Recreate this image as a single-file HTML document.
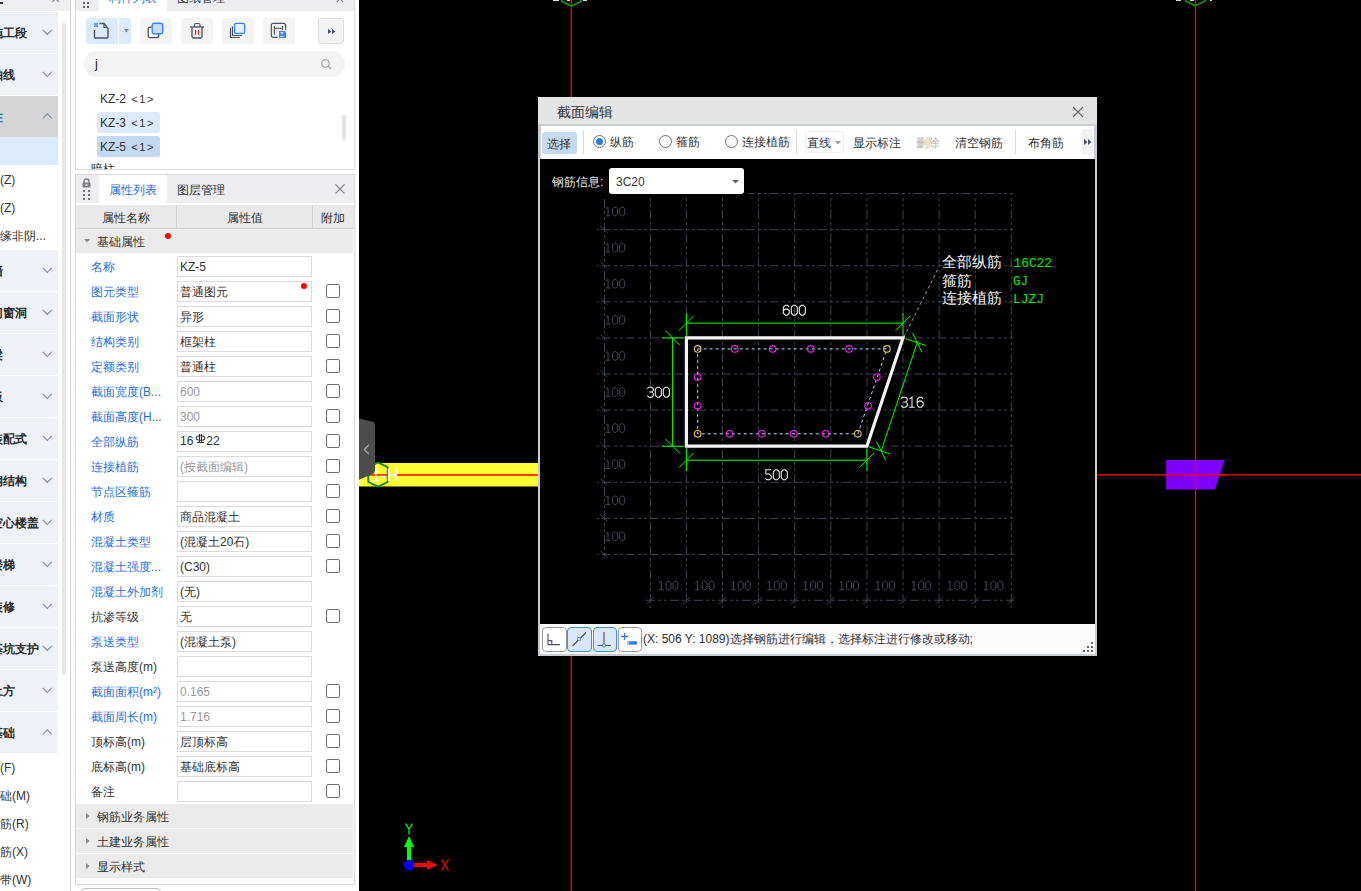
<!DOCTYPE html><html><head><meta charset="utf-8"><style>

*{box-sizing:border-box;margin:0;padding:0}
html,body{width:1361px;height:891px;overflow:hidden;background:#000;font-family:"Liberation Sans",sans-serif;font-size:12px;color:#333}
.ab{position:absolute}
.t{position:absolute;white-space:nowrap;line-height:14px}
svg{position:absolute;overflow:visible}

</style></head><body>
<div class="ab" style="left:0;top:0;width:359px;height:891px;background:#fff"></div>
<div class="ab" style="left:0;top:0;width:70px;height:11px;background:#efeff2"></div>
<div class="ab" style="left:0;top:2px;width:3px;height:1.5px;background:#333"></div>
<svg style="left:0;top:0" width="1" height="1"><path d="M52.5 1.8 L56 -2 M58.8 1.8 L55.3 -2" stroke="#8a8a8a" stroke-width="1.2"/></svg>
<div class="ab" style="left:70px;top:0;width:1px;height:891px;background:#d4d4d4"></div>
<div class="ab" style="left:0;top:12px;width:58px;height:41px;background:#f0f1f6"></div>
<div class="t" style="left:-9px;top:26px;font-weight:bold;color:#2b2b2b">施工段</div>
<svg style="left:42px;top:29px" width="12" height="7"><path d="M0.8 0.8 L5.3 5.3 L9.8 0.8" fill="none" stroke="#8692ad" stroke-width="1.2"/></svg>
<div class="ab" style="left:0;top:54px;width:58px;height:41px;background:#f0f1f6"></div>
<div class="t" style="left:-9px;top:68px;font-weight:bold;color:#2b2b2b">轴线</div>
<svg style="left:42px;top:71px" width="12" height="7"><path d="M0.8 0.8 L5.3 5.3 L9.8 0.8" fill="none" stroke="#8692ad" stroke-width="1.2"/></svg>
<div class="ab" style="left:0;top:96px;width:58px;height:41px;background:#d5d5d5"></div>
<div class="t" style="left:-9px;top:110px;font-weight:bold;color:#1f6fe5">柱</div>
<svg style="left:42px;top:113px" width="12" height="7"><path d="M0.8 5.3 L5.3 0.8 L9.8 5.3" fill="none" stroke="#8692ad" stroke-width="1.2"/></svg>
<div class="ab" style="left:0;top:137px;width:58px;height:28px;background:#dbeafd"></div>
<div class="t" style="left:0;top:173px;color:#333">(Z)</div>
<div class="t" style="left:0;top:201px;color:#333">(Z)</div>
<div class="t" style="left:0;top:229px;color:#333">缘非阴...</div>
<div class="ab" style="left:0;top:250px;width:58px;height:41px;background:#f0f1f6"></div>
<div class="t" style="left:-9px;top:264px;font-weight:bold;color:#2b2b2b">墙</div>
<svg style="left:42px;top:267px" width="12" height="7"><path d="M0.8 0.8 L5.3 5.3 L9.8 0.8" fill="none" stroke="#8692ad" stroke-width="1.2"/></svg>
<div class="ab" style="left:0;top:292px;width:58px;height:41px;background:#f0f1f6"></div>
<div class="t" style="left:-9px;top:306px;font-weight:bold;color:#2b2b2b">门窗洞</div>
<svg style="left:42px;top:309px" width="12" height="7"><path d="M0.8 0.8 L5.3 5.3 L9.8 0.8" fill="none" stroke="#8692ad" stroke-width="1.2"/></svg>
<div class="ab" style="left:0;top:334px;width:58px;height:41px;background:#f0f1f6"></div>
<div class="t" style="left:-9px;top:348px;font-weight:bold;color:#2b2b2b">梁</div>
<svg style="left:42px;top:351px" width="12" height="7"><path d="M0.8 0.8 L5.3 5.3 L9.8 0.8" fill="none" stroke="#8692ad" stroke-width="1.2"/></svg>
<div class="ab" style="left:0;top:376px;width:58px;height:41px;background:#f0f1f6"></div>
<div class="t" style="left:-9px;top:390px;font-weight:bold;color:#2b2b2b">板</div>
<svg style="left:42px;top:393px" width="12" height="7"><path d="M0.8 0.8 L5.3 5.3 L9.8 0.8" fill="none" stroke="#8692ad" stroke-width="1.2"/></svg>
<div class="ab" style="left:0;top:418px;width:58px;height:41px;background:#f0f1f6"></div>
<div class="t" style="left:-9px;top:432px;font-weight:bold;color:#2b2b2b">装配式</div>
<svg style="left:42px;top:435px" width="12" height="7"><path d="M0.8 0.8 L5.3 5.3 L9.8 0.8" fill="none" stroke="#8692ad" stroke-width="1.2"/></svg>
<div class="ab" style="left:0;top:460px;width:58px;height:41px;background:#f0f1f6"></div>
<div class="t" style="left:-9px;top:474px;font-weight:bold;color:#2b2b2b">钢结构</div>
<svg style="left:42px;top:477px" width="12" height="7"><path d="M0.8 0.8 L5.3 5.3 L9.8 0.8" fill="none" stroke="#8692ad" stroke-width="1.2"/></svg>
<div class="ab" style="left:0;top:502px;width:58px;height:41px;background:#f0f1f6"></div>
<div class="t" style="left:-9px;top:516px;font-weight:bold;color:#2b2b2b">空心楼盖</div>
<svg style="left:42px;top:519px" width="12" height="7"><path d="M0.8 0.8 L5.3 5.3 L9.8 0.8" fill="none" stroke="#8692ad" stroke-width="1.2"/></svg>
<div class="ab" style="left:0;top:544px;width:58px;height:41px;background:#f0f1f6"></div>
<div class="t" style="left:-9px;top:558px;font-weight:bold;color:#2b2b2b">楼梯</div>
<svg style="left:42px;top:561px" width="12" height="7"><path d="M0.8 0.8 L5.3 5.3 L9.8 0.8" fill="none" stroke="#8692ad" stroke-width="1.2"/></svg>
<div class="ab" style="left:0;top:586px;width:58px;height:41px;background:#f0f1f6"></div>
<div class="t" style="left:-9px;top:600px;font-weight:bold;color:#2b2b2b">装修</div>
<svg style="left:42px;top:603px" width="12" height="7"><path d="M0.8 0.8 L5.3 5.3 L9.8 0.8" fill="none" stroke="#8692ad" stroke-width="1.2"/></svg>
<div class="ab" style="left:0;top:628px;width:58px;height:41px;background:#f0f1f6"></div>
<div class="t" style="left:-9px;top:642px;font-weight:bold;color:#2b2b2b">基坑支护</div>
<svg style="left:42px;top:645px" width="12" height="7"><path d="M0.8 0.8 L5.3 5.3 L9.8 0.8" fill="none" stroke="#8692ad" stroke-width="1.2"/></svg>
<div class="ab" style="left:0;top:670px;width:58px;height:41px;background:#f0f1f6"></div>
<div class="t" style="left:-9px;top:684px;font-weight:bold;color:#2b2b2b">土方</div>
<svg style="left:42px;top:687px" width="12" height="7"><path d="M0.8 0.8 L5.3 5.3 L9.8 0.8" fill="none" stroke="#8692ad" stroke-width="1.2"/></svg>
<div class="ab" style="left:0;top:712px;width:58px;height:41px;background:#f0f1f6"></div>
<div class="t" style="left:-9px;top:726px;font-weight:bold;color:#2b2b2b">基础</div>
<svg style="left:42px;top:729px" width="12" height="7"><path d="M0.8 5.3 L5.3 0.8 L9.8 5.3" fill="none" stroke="#8692ad" stroke-width="1.2"/></svg>
<div class="t" style="left:0;top:761px;color:#333">(F)</div>
<div class="t" style="left:0;top:789px;color:#333">础(M)</div>
<div class="t" style="left:0;top:817px;color:#333">筋(R)</div>
<div class="t" style="left:0;top:845px;color:#333">筋(X)</div>
<div class="t" style="left:0;top:873px;color:#333">带(W)</div>
<div class="ab" style="left:62px;top:23px;width:4px;height:652px;background:#e8e8e8;border-radius:2px"></div>
<div class="ab" style="left:75px;top:-20px;width:280px;height:190px;border:1px solid #d9d9d9;background:#fff"></div>
<div class="ab" style="left:76px;top:0;width:278px;height:11px;background:#eeeef0"></div>
<div class="ab" style="left:99px;top:0;width:68px;height:11px;background:#fff"></div>
<div class="ab" style="left:83px;top:2.2px;width:1.8px;height:1.9px;background:#666"></div>
<div class="ab" style="left:83px;top:6.0px;width:1.8px;height:1.9px;background:#666"></div>
<div class="ab" style="left:87.3px;top:2.2px;width:1.8px;height:1.9px;background:#666"></div>
<div class="ab" style="left:87.3px;top:6.0px;width:1.8px;height:1.9px;background:#666"></div>
<div class="t" style="left:109px;top:-9px;color:#1f6fe5">构件列表</div>
<div class="t" style="left:177px;top:-9px;color:#333">图纸管理</div>
<svg style="left:0;top:0" width="1" height="1"><path d="M336.8 2 L340.5 -2 M343 2 L339.3 -2" stroke="#8a8a8a" stroke-width="1.3"/></svg>
<div class="ab" style="left:86px;top:18px;width:32px;height:26px;background:#dbeafd;border-radius:3px 0 0 3px"></div>
<div class="ab" style="left:119px;top:18px;width:12px;height:26px;background:#dbeafd;border-radius:0 3px 3px 0"></div>
<svg style="left:124px;top:29px" width="6" height="4"><path d="M0 0 H5 L2.5 3.5Z" fill="#8a8a8a"/></svg>
<svg style="left:93px;top:22px" width="18" height="17"><path d="M1.5 8 V15 Q1.5 16 2.5 16 H14 Q15 16 15 15 V6.5 L11 1.5 H6.5" fill="none" stroke="#4b5263" stroke-width="1.4"/><path d="M11 1.5 V5.5 H15" fill="none" stroke="#4b5263" stroke-width="1.2"/><g fill="#3a86f0"><rect x="1" y="1" width="1.6" height="1.6"/><rect x="3.4" y="1" width="1.6" height="1.6"/><rect x="2.2" y="2.2" width="1.6" height="1.6"/><rect x="1" y="3.4" width="1.6" height="1.6"/><rect x="3.4" y="3.4" width="1.6" height="1.6"/></g></svg>
<div class="ab" style="left:140px;top:18px;width:32px;height:26px;background:#f4f4f4;border-radius:3px"></div>
<div class="ab" style="left:181px;top:18px;width:32px;height:26px;background:#f4f4f4;border-radius:3px"></div>
<div class="ab" style="left:222px;top:18px;width:32px;height:26px;background:#f4f4f4;border-radius:3px"></div>
<div class="ab" style="left:263px;top:18px;width:32px;height:26px;background:#f4f4f4;border-radius:3px"></div>
<svg style="left:147px;top:22px" width="18" height="17"><rect x="1.2" y="5.2" width="10.5" height="10.5" rx="2" fill="#fff" stroke="#4b5263" stroke-width="1.3"/><rect x="5.2" y="1.2" width="10.5" height="10.5" rx="2" fill="#c8dbf6" stroke="#3a86f0" stroke-width="1.4"/></svg>
<svg style="left:189px;top:22px" width="17" height="17"><path d="M1 5 H15" stroke="#4b5263" stroke-width="1.3"/><path d="M5.5 5 V3 Q5.5 1.5 7 1.5 H9.5 Q11 1.5 11 3 V5" fill="none" stroke="#4b5263" stroke-width="1.2"/><path d="M3 5 V14.5 Q3 16 4.5 16 H11.5 Q13 16 13 14.5 V5" fill="none" stroke="#4b5263" stroke-width="1.3"/><path d="M6.5 8 V13 M9.5 8 V13" stroke="#e02020" stroke-width="1.2"/></svg>
<svg style="left:229px;top:22px" width="18" height="17"><path d="M1.5 6 V15.5 H11" fill="none" stroke="#4b5263" stroke-width="1.2"/><path d="M3.5 4.5 V13.5 H13" fill="none" stroke="#4b5263" stroke-width="1.2"/><rect x="5.6" y="1.4" width="10" height="10" rx="1.5" fill="#e6f0fd" stroke="#3a86f0" stroke-width="1.4"/></svg>
<svg style="left:270px;top:22px" width="18" height="17"><path d="M7.7 15.4 H3.3 Q1.3 15.4 1.3 13.4 V3.4 Q1.3 1.4 3.3 1.4 H13.6 Q15.6 1.4 15.6 3.4 V7.7" fill="none" stroke="#4b5263" stroke-width="1.2"/><path d="M4.4 4 V12.8 M4.4 6.3 H12.5 M12.5 4 V8" fill="none" stroke="#4b5263" stroke-width="1.1"/><path d="M9 9.1 H14.5 L16 10.6 V16 H9Z" fill="#3a86f0"/><path d="M10.5 10.5 H13.5 M12 10.5 V13 M10.3 14.6 H13.7" stroke="#e8f0ff" stroke-width="0.9"/></svg>
<div class="ab" style="left:318px;top:18px;width:26px;height:26px;background:#f3f3f3;border:1px solid #dcdcdc;border-radius:3px"></div>
<svg style="left:327.5px;top:29px" width="8" height="5"><path d="M0 0 L3.5 2.5 L0 5Z M4 0 L7.5 2.5 L4 5Z" fill="#4b5263"/></svg>
<div class="ab" style="left:84px;top:51px;width:261px;height:26px;background:#f3f3f3;border-radius:13px"></div>
<div class="t" style="left:95px;top:57px;color:#222;font-size:13px">j</div>
<svg style="left:321px;top:59px" width="11" height="11"><circle cx="4.5" cy="4.5" r="3.7" fill="none" stroke="#9a9a9a" stroke-width="1.1"/><path d="M7.3 7.3 L10 10" stroke="#9a9a9a" stroke-width="1.1"/></svg>
<div class="t" style="left:100px;top:92px;color:#333">KZ-2 <span style="letter-spacing:1.5px;font-size:11px;margin-left:2px">&lt;1&gt;</span></div>
<div class="ab" style="left:97px;top:112px;width:63px;height:21px;background:#dbeafd;border-radius:2px"></div>
<div class="t" style="left:100px;top:116px;color:#333">KZ-3 <span style="letter-spacing:1.5px;font-size:11px;margin-left:2px">&lt;1&gt;</span></div>
<div class="ab" style="left:97px;top:136px;width:63px;height:21px;background:#c3d9f2;border-radius:2px"></div>
<div class="t" style="left:100px;top:140px;color:#333">KZ-5 <span style="letter-spacing:1.5px;font-size:11px;margin-left:2px">&lt;1&gt;</span></div>
<div class="ab" style="left:76px;top:160px;width:278px;height:9px;overflow:hidden"><div class="t" style="left:15px;top:2px;color:#333">暗柱</div></div>
<div class="ab" style="left:342px;top:115px;width:4px;height:25px;background:#e4e4e4;border-radius:2px"></div>
<div class="ab" style="left:75px;top:174px;width:280px;height:711px;border:1px solid #d9d9d9;background:#fff"></div>
<div class="ab" style="left:76px;top:175px;width:278px;height:28px;background:#eeeef0"></div>
<div class="ab" style="left:99px;top:175px;width:68px;height:28px;background:#fff"></div>
<svg style="left:82px;top:178px" width="9" height="22"><path d="M2 5 V3.5 Q2 1 4.5 1 Q7 1 7 3.5 V5" fill="none" stroke="#7f7f7f" stroke-width="1.4"/><rect x="0.5" y="4.5" width="8" height="5" rx="1" fill="#7f7f7f"/><rect x="3.6" y="6.2" width="1.8" height="1.6" fill="#eee"/><rect x="1" y="12" width="2" height="2" fill="#777"/><rect x="6" y="12" width="2" height="2" fill="#777"/><rect x="1" y="16" width="2" height="2" fill="#777"/><rect x="6" y="16" width="2" height="2" fill="#777"/><rect x="1" y="20" width="2" height="2" fill="#777"/><rect x="6" y="20" width="2" height="2" fill="#777"/></svg>
<div class="t" style="left:109px;top:183px;color:#1f6fe5">属性列表</div>
<div class="t" style="left:177px;top:183px;color:#333">图层管理</div>
<svg style="left:335px;top:184px" width="10" height="10"><path d="M0.5 0.5 L9.5 9.5 M9.5 0.5 L0.5 9.5" stroke="#8a8a8a" stroke-width="1.1"/></svg>
<div class="ab" style="left:76px;top:205px;width:278px;height:24px;background:#e9e9e9;border-bottom:1px solid #d2d2d2"></div>
<div class="ab" style="left:176px;top:205px;width:1px;height:23px;background:#d2d2d2"></div>
<div class="ab" style="left:312px;top:205px;width:1px;height:23px;background:#d2d2d2"></div>
<div class="t" style="left:102px;top:211px;color:#333">属性名称</div>
<div class="t" style="left:227px;top:211px;color:#333">属性值</div>
<div class="t" style="left:321px;top:211px;color:#333">附加</div>
<div class="ab" style="left:76px;top:229px;width:277px;height:24px;background:#ebebeb"></div>
<svg style="left:84px;top:239px" width="7" height="4"><path d="M0 0 H6 L3 3.5Z" fill="#8a8a8a"/></svg>
<div class="t" style="left:97px;top:235px;color:#333">基础属性</div>
<div class="ab" style="left:165px;top:233px;width:6px;height:6px;border-radius:3px;background:#f00"></div>
<div class="t" style="left:91px;top:260px;color:#1f6fe5">名称</div>
<div class="ab" style="left:177px;top:256px;width:135px;height:21px;border:1px solid #dcdcdc;background:#fff"></div>
<div class="t" style="left:180px;top:260px;color:#333">KZ-5</div>
<div class="t" style="left:91px;top:285px;color:#1f6fe5">图元类型</div>
<div class="ab" style="left:177px;top:281px;width:135px;height:21px;border:1px solid #dcdcdc;background:#fff"></div>
<div class="t" style="left:180px;top:285px;color:#333">普通图元</div>
<div class="ab" style="left:326px;top:284px;width:14px;height:14px;border:1px solid #6f6f6f;border-radius:2px;background:#fff"></div>
<div class="t" style="left:91px;top:310px;color:#1f6fe5">截面形状</div>
<div class="ab" style="left:177px;top:306px;width:135px;height:21px;border:1px solid #dcdcdc;background:#fff"></div>
<div class="t" style="left:180px;top:310px;color:#333">异形</div>
<div class="ab" style="left:326px;top:309px;width:14px;height:14px;border:1px solid #6f6f6f;border-radius:2px;background:#fff"></div>
<div class="t" style="left:91px;top:335px;color:#1f6fe5">结构类别</div>
<div class="ab" style="left:177px;top:331px;width:135px;height:21px;border:1px solid #dcdcdc;background:#fff"></div>
<div class="t" style="left:180px;top:335px;color:#333">框架柱</div>
<div class="ab" style="left:326px;top:334px;width:14px;height:14px;border:1px solid #6f6f6f;border-radius:2px;background:#fff"></div>
<div class="t" style="left:91px;top:360px;color:#1f6fe5">定额类别</div>
<div class="ab" style="left:177px;top:356px;width:135px;height:21px;border:1px solid #dcdcdc;background:#fff"></div>
<div class="t" style="left:180px;top:360px;color:#333">普通柱</div>
<div class="ab" style="left:326px;top:359px;width:14px;height:14px;border:1px solid #6f6f6f;border-radius:2px;background:#fff"></div>
<div class="t" style="left:91px;top:385px;color:#1f6fe5">截面宽度(B...</div>
<div class="ab" style="left:177px;top:381px;width:135px;height:21px;border:1px solid #dcdcdc;background:#fff"></div>
<div class="t" style="left:180px;top:385px;color:#9a9a9a">600</div>
<div class="ab" style="left:326px;top:384px;width:14px;height:14px;border:1px solid #6f6f6f;border-radius:2px;background:#fff"></div>
<div class="t" style="left:91px;top:410px;color:#1f6fe5">截面高度(H...</div>
<div class="ab" style="left:177px;top:406px;width:135px;height:21px;border:1px solid #dcdcdc;background:#fff"></div>
<div class="t" style="left:180px;top:410px;color:#9a9a9a">300</div>
<div class="ab" style="left:326px;top:409px;width:14px;height:14px;border:1px solid #6f6f6f;border-radius:2px;background:#fff"></div>
<div class="t" style="left:91px;top:435px;color:#1f6fe5">全部纵筋</div>
<div class="ab" style="left:177px;top:431px;width:135px;height:21px;border:1px solid #dcdcdc;background:#fff"></div>
<div class="t" style="left:180px;top:434px;color:#333">16<span style="display:inline-block;width:13px"></span>22</div>
<div class="ab" style="left:326px;top:434px;width:14px;height:14px;border:1px solid #6f6f6f;border-radius:2px;background:#fff"></div>
<div class="t" style="left:91px;top:460px;color:#1f6fe5">连接植筋</div>
<div class="ab" style="left:177px;top:456px;width:135px;height:21px;border:1px solid #dcdcdc;background:#fff"></div>
<div class="t" style="left:180px;top:460px;color:#9a9a9a">(按截面编辑)</div>
<div class="ab" style="left:326px;top:459px;width:14px;height:14px;border:1px solid #6f6f6f;border-radius:2px;background:#fff"></div>
<div class="t" style="left:91px;top:485px;color:#1f6fe5">节点区箍筋</div>
<div class="ab" style="left:177px;top:481px;width:135px;height:21px;border:1px solid #dcdcdc;background:#fff"></div>
<div class="ab" style="left:326px;top:484px;width:14px;height:14px;border:1px solid #6f6f6f;border-radius:2px;background:#fff"></div>
<div class="t" style="left:91px;top:510px;color:#1f6fe5">材质</div>
<div class="ab" style="left:177px;top:506px;width:135px;height:21px;border:1px solid #dcdcdc;background:#fff"></div>
<div class="t" style="left:180px;top:510px;color:#333">商品混凝土</div>
<div class="ab" style="left:326px;top:509px;width:14px;height:14px;border:1px solid #6f6f6f;border-radius:2px;background:#fff"></div>
<div class="t" style="left:91px;top:535px;color:#1f6fe5">混凝土类型</div>
<div class="ab" style="left:177px;top:531px;width:135px;height:21px;border:1px solid #dcdcdc;background:#fff"></div>
<div class="t" style="left:180px;top:535px;color:#333">(混凝土20石)</div>
<div class="ab" style="left:326px;top:534px;width:14px;height:14px;border:1px solid #6f6f6f;border-radius:2px;background:#fff"></div>
<div class="t" style="left:91px;top:560px;color:#1f6fe5">混凝土强度...</div>
<div class="ab" style="left:177px;top:556px;width:135px;height:21px;border:1px solid #dcdcdc;background:#fff"></div>
<div class="t" style="left:180px;top:560px;color:#333">(C30)</div>
<div class="ab" style="left:326px;top:559px;width:14px;height:14px;border:1px solid #6f6f6f;border-radius:2px;background:#fff"></div>
<div class="t" style="left:91px;top:585px;color:#1f6fe5">混凝土外加剂</div>
<div class="ab" style="left:177px;top:581px;width:135px;height:21px;border:1px solid #dcdcdc;background:#fff"></div>
<div class="t" style="left:180px;top:585px;color:#333">(无)</div>
<div class="t" style="left:91px;top:610px;color:#333">抗渗等级</div>
<div class="ab" style="left:177px;top:606px;width:135px;height:21px;border:1px solid #dcdcdc;background:#fff"></div>
<div class="t" style="left:180px;top:610px;color:#333">无</div>
<div class="ab" style="left:326px;top:609px;width:14px;height:14px;border:1px solid #6f6f6f;border-radius:2px;background:#fff"></div>
<div class="t" style="left:91px;top:635px;color:#1f6fe5">泵送类型</div>
<div class="ab" style="left:177px;top:631px;width:135px;height:21px;border:1px solid #dcdcdc;background:#fff"></div>
<div class="t" style="left:180px;top:635px;color:#333">(混凝土泵)</div>
<div class="t" style="left:91px;top:660px;color:#333">泵送高度(m)</div>
<div class="ab" style="left:177px;top:656px;width:135px;height:21px;border:1px solid #dcdcdc;background:#fff"></div>
<div class="t" style="left:91px;top:685px;color:#1f6fe5">截面面积(m²)</div>
<div class="ab" style="left:177px;top:681px;width:135px;height:21px;border:1px solid #dcdcdc;background:#fff"></div>
<div class="t" style="left:180px;top:685px;color:#9a9a9a">0.165</div>
<div class="ab" style="left:326px;top:684px;width:14px;height:14px;border:1px solid #6f6f6f;border-radius:2px;background:#fff"></div>
<div class="t" style="left:91px;top:710px;color:#1f6fe5">截面周长(m)</div>
<div class="ab" style="left:177px;top:706px;width:135px;height:21px;border:1px solid #dcdcdc;background:#fff"></div>
<div class="t" style="left:180px;top:710px;color:#9a9a9a">1.716</div>
<div class="ab" style="left:326px;top:709px;width:14px;height:14px;border:1px solid #6f6f6f;border-radius:2px;background:#fff"></div>
<div class="t" style="left:91px;top:735px;color:#333">顶标高(m)</div>
<div class="ab" style="left:177px;top:731px;width:135px;height:21px;border:1px solid #dcdcdc;background:#fff"></div>
<div class="t" style="left:180px;top:735px;color:#333">层顶标高</div>
<div class="ab" style="left:326px;top:734px;width:14px;height:14px;border:1px solid #6f6f6f;border-radius:2px;background:#fff"></div>
<div class="t" style="left:91px;top:760px;color:#333">底标高(m)</div>
<div class="ab" style="left:177px;top:756px;width:135px;height:21px;border:1px solid #dcdcdc;background:#fff"></div>
<div class="t" style="left:180px;top:760px;color:#333">基础底标高</div>
<div class="ab" style="left:326px;top:759px;width:14px;height:14px;border:1px solid #6f6f6f;border-radius:2px;background:#fff"></div>
<div class="t" style="left:91px;top:785px;color:#333">备注</div>
<div class="ab" style="left:177px;top:781px;width:135px;height:21px;border:1px solid #dcdcdc;background:#fff"></div>
<div class="ab" style="left:326px;top:784px;width:14px;height:14px;border:1px solid #6f6f6f;border-radius:2px;background:#fff"></div>
<svg style="left:195px;top:433px" width="11" height="11"><ellipse cx="5.5" cy="5" rx="4.3" ry="2.3" fill="none" stroke="#333" stroke-width="1.1"/><path d="M4.5 1 V9.5 M6.5 1 V9.5 M2 9.5 H9" stroke="#333" stroke-width="1.1"/></svg>
<div class="ab" style="left:301px;top:283px;width:6px;height:6px;border-radius:3px;background:#f00"></div>
<div class="ab" style="left:76px;top:804px;width:277px;height:24px;background:#ebebeb"></div>
<svg style="left:86px;top:813px" width="4" height="7"><path d="M0 0 V6 L3.5 3Z" fill="#8a8a8a"/></svg>
<div class="t" style="left:97px;top:810px;color:#333">钢筋业务属性</div>
<div class="ab" style="left:76px;top:829px;width:277px;height:24px;background:#ebebeb"></div>
<svg style="left:86px;top:838px" width="4" height="7"><path d="M0 0 V6 L3.5 3Z" fill="#8a8a8a"/></svg>
<div class="t" style="left:97px;top:835px;color:#333">土建业务属性</div>
<div class="ab" style="left:76px;top:854px;width:277px;height:24px;background:#ebebeb"></div>
<svg style="left:86px;top:863px" width="4" height="7"><path d="M0 0 V6 L3.5 3Z" fill="#8a8a8a"/></svg>
<div class="t" style="left:97px;top:860px;color:#333">显示样式</div>
<div class="ab" style="left:81px;top:888px;width:80px;height:20px;border:1px solid #bdbdbd;border-radius:4px;background:#fff"></div>
<svg style="left:0;top:0" width="1361" height="891" viewBox="0 0 1361 891"><rect x="359" y="463" width="190" height="23.5" fill="#ffff33"/><rect x="359" y="474.2" width="1002" height="1.3" fill="#ff0000"/><rect x="359" y="474" width="190" height="2" fill="#ff4000"/><rect x="570.7" y="0" width="1.3" height="891" fill="#ff0000"/><rect x="1194.85" y="0" width="1.3" height="891" fill="#ff0000"/><path d="M378.0 462.5 L387.7 467.2 V482.0 L378.0 486.7 L368.3 482.0 V467.2Z" fill="none" stroke="#138a13" stroke-width="1.9" stroke-linejoin="round"/><path d="M571.5 -18.1 L581.2 -13.4 V1.4 L571.5 6.1 L561.8 1.4 V-13.4Z" fill="none" stroke="#138a13" stroke-width="1.9" stroke-linejoin="round"/><path d="M1195.3 -18.5 L1205.0 -13.8 V1.0 L1195.3 5.7 L1185.6 1.0 V-13.8Z" fill="none" stroke="#138a13" stroke-width="1.9" stroke-linejoin="round"/><path d="M375.8 468.5 V480.6 M372 480.6 H378.5 M380.6 476.5 H385 M388.6 468.5 V481 M396.3 468.5 V481" stroke="#fff" stroke-width="1.5" fill="none"/><rect x="388.6" y="474" width="7.7" height="2" fill="#fff"/><path d="M553 0.5 H559 M567 0.5 H570 M583 0.5 H587 M1176 0.5 H1181 M1190 0.5 H1194 M1210 0.5 H1212" stroke="#ddd" stroke-width="1.2"/><path d="M1166.2 460 H1224.6 L1215 489.5 H1166.2Z" fill="#8000ff"/><rect x="1166" y="474.2" width="60" height="1.3" fill="#ff0000"/><rect x="1194.85" y="460" width="1.3" height="30" fill="#ff0000"/><path d="M407 865 V846.5 H411 V865Z" fill="#00ff00"/><path d="M404 847 L409 836 L414 847Z" fill="#00ff00"/><path d="M405.5 823.5 L409 829 L412.5 823.5 M409 829 V834.5" stroke="#00ff00" stroke-width="1.3" fill="none"/><path d="M409 863 H428 V867 H409Z" fill="#ff0000"/><path d="M427 860 L437.6 865 L427 870Z" fill="#ff0000"/><path d="M441.5 859.5 L448.5 870.5 M448.5 859.5 L441.5 870.5" stroke="#ff0000" stroke-width="1.3"/><circle cx="409" cy="865" r="5.3" fill="#0000ff"/><path d="M359 418.5 L372 421.5 Q375 422.3 375 425.5 V470 Q375 473.5 372 474.3 L359 479.7Z" fill="#4d4d4d"/><path d="M368.8 445 L364.3 449.5 L368.8 454" fill="none" stroke="#a8a8a8" stroke-width="1.1"/></svg>
<div class="ab" style="left:538px;top:97px;width:559px;height:559px;background:#c9cdd2"></div>
<div class="ab" style="left:538px;top:97px;width:559px;height:27px;background:#e4e4e4"></div>
<div class="t" style="left:557px;top:105px;font-size:14px;color:#333">截面编辑</div>
<svg style="left:1072px;top:106px" width="12" height="12"><path d="M1 1 L11 11 M11 1 L1 11" stroke="#6a6a6a" stroke-width="1.2"/></svg>
<div class="ab" style="left:541px;top:126px;width:553px;height:33px;background:#fff"></div>
<div class="ab" style="left:542px;top:132px;width:35px;height:22px;background:#c5daf1;border-radius:3px"></div>
<div class="t" style="left:547px;top:137px;color:#333">选择</div>
<div class="ab" style="left:583px;top:130px;width:1px;height:24px;background:#dadada"></div>
<div class="ab" style="left:592.5px;top:134.5px;width:13px;height:13px;border:1px solid #707070;border-radius:50%;background:#fff"></div>
<div class="ab" style="left:595.5px;top:137.5px;width:7px;height:7px;border-radius:50%;background:#2a7de1"></div>
<div class="t" style="left:610px;top:135px;color:#333">纵筋</div>
<div class="ab" style="left:658.5px;top:134.5px;width:13px;height:13px;border:1px solid #707070;border-radius:50%;background:#fff"></div>
<div class="t" style="left:676px;top:135px;color:#333">箍筋</div>
<div class="ab" style="left:724.5px;top:134.5px;width:13px;height:13px;border:1px solid #707070;border-radius:50%;background:#fff"></div>
<div class="t" style="left:742px;top:135px;color:#333">连接植筋</div>
<div class="ab" style="left:796px;top:130px;width:1px;height:24px;background:#dadada"></div>
<div class="ab" style="left:804.5px;top:131px;width:39px;height:22px;border:1px solid #f0f0f0;border-radius:3px;background:#fff"></div>
<div class="t" style="left:807px;top:136px;color:#333">直线</div>
<svg style="left:835px;top:141px" width="6" height="4"><path d="M0 0 H6 L3 3.5Z" fill="#9a9a9a"/></svg>
<div class="t" style="left:853px;top:136px;color:#333">显示标注</div>
<div class="t" style="left:916px;top:136px;color:#b4b4b4">删除</div>
<div class="t" style="left:955px;top:136px;color:#333">清空钢筋</div>
<div class="ab" style="left:1015px;top:130px;width:1px;height:24px;background:#dadada"></div>
<div class="t" style="left:1028px;top:136px;color:#333">布角筋</div>
<div class="ab" style="left:1082px;top:129px;width:11px;height:26px;background:#f3f3f3;border-radius:3px"></div>
<svg style="left:1084px;top:139px" width="8" height="6"><path d="M0 0 L3.5 3 L0 6Z M4 0 L7.5 3 L4 6Z" fill="#4b5263"/></svg>
<div class="ab" style="left:540px;top:159px;width:555px;height:465px;background:#000"></div>
<div class="ab" style="left:540px;top:624px;width:555px;height:30px;background:#fafafa"></div>
<div class="ab" style="left:542px;top:627px;width:24.5px;height:24.5px;border:1px solid #9a9a9a;border-radius:4px;background:#fff"></div>
<svg style="left:546px;top:632px" width="16" height="15"><path d="M2 1.5 V12.6 H14 M2 8.6 H5.8 V12.6" fill="none" stroke="#4b5263" stroke-width="1.1"/></svg>
<div class="ab" style="left:567px;top:627px;width:24.5px;height:24.5px;border:1.2px solid #3d8ae8;border-radius:4px;background:#d9e7fa"></div>
<svg style="left:570px;top:630px" width="18" height="18"><path d="M2.5 16 L16 2.5" stroke="#4b5263" stroke-width="1.1"/><rect x="7.7" y="7.7" width="2.6" height="2.6" fill="#fff" stroke="#3d8ae8" stroke-width="0.9"/></svg>
<div class="ab" style="left:592.5px;top:627px;width:24.5px;height:24.5px;border:1.2px solid #3d8ae8;border-radius:4px;background:#d9e7fa"></div>
<svg style="left:595px;top:630px" width="18" height="18"><path d="M9 2 V15.5 M2.5 15.5 H16" stroke="#4b5263" stroke-width="1.1"/><rect x="7.7" y="14.2" width="2.6" height="2.6" fill="#fff" stroke="#3d8ae8" stroke-width="0.9"/></svg>
<div class="ab" style="left:618px;top:627px;width:24px;height:24.5px;border:1px solid #9a9a9a;border-radius:4px;background:#fff"></div>
<svg style="left:620px;top:629px" width="20" height="20"><path d="M4.5 4 V11 M1 7.5 H8" stroke="#2a7de1" stroke-width="1.3"/><rect x="7.5" y="12.3" width="9.5" height="3.3" fill="#2a7de1"/><rect x="8.3" y="13.1" width="1" height="1.7" fill="#fff"/></svg>
<div class="t" style="left:643px;top:632px;color:#333">(X: 506 Y: 1089)选择钢筋进行编辑，选择标注进行修改或移动;</div>
<div class="ab" style="left:1091px;top:642px;width:2px;height:2px;background:#666"></div>
<div class="ab" style="left:1087px;top:646px;width:2px;height:2px;background:#666"></div>
<div class="ab" style="left:1091px;top:646px;width:2px;height:2px;background:#666"></div>
<div class="ab" style="left:1083px;top:650px;width:2px;height:2px;background:#666"></div>
<div class="ab" style="left:1087px;top:650px;width:2px;height:2px;background:#666"></div>
<div class="ab" style="left:1091px;top:650px;width:2px;height:2px;background:#666"></div>
<svg style="left:0;top:0" width="1361" height="891" viewBox="0 0 1361 891"><defs><clipPath id="cc"><rect x="540" y="159" width="555" height="465"/></clipPath></defs><g clip-path="url(#cc)"><path d="M597 193.50 H1013" stroke="#39414b" stroke-width="1" stroke-dasharray="9 3 3 3 3 3" stroke-dashoffset="19"/><path d="M597 229.60 H1013" stroke="#39414b" stroke-width="1" stroke-dasharray="9 3 3 3 3 3" stroke-dashoffset="19"/><path d="M597 265.70 H1013" stroke="#39414b" stroke-width="1" stroke-dasharray="9 3 3 3 3 3" stroke-dashoffset="19"/><path d="M597 301.80 H1013" stroke="#39414b" stroke-width="1" stroke-dasharray="9 3 3 3 3 3" stroke-dashoffset="19"/><path d="M597 337.90 H1013" stroke="#39414b" stroke-width="1" stroke-dasharray="9 3 3 3 3 3" stroke-dashoffset="19"/><path d="M597 374.00 H1013" stroke="#39414b" stroke-width="1" stroke-dasharray="9 3 3 3 3 3" stroke-dashoffset="19"/><path d="M597 410.10 H1013" stroke="#39414b" stroke-width="1" stroke-dasharray="9 3 3 3 3 3" stroke-dashoffset="19"/><path d="M597 446.20 H1013" stroke="#39414b" stroke-width="1" stroke-dasharray="9 3 3 3 3 3" stroke-dashoffset="19"/><path d="M597 482.30 H1013" stroke="#39414b" stroke-width="1" stroke-dasharray="9 3 3 3 3 3" stroke-dashoffset="19"/><path d="M597 518.40 H1013" stroke="#39414b" stroke-width="1" stroke-dasharray="9 3 3 3 3 3" stroke-dashoffset="19"/><path d="M597 554.50 H1013" stroke="#39414b" stroke-width="1" stroke-dasharray="9 3 3 3 3 3" stroke-dashoffset="19"/><path d="M650.30 193.5 V608" stroke="#39414b" stroke-width="1" stroke-dasharray="9 3 3 3 3 3" stroke-dashoffset="7.5"/><path d="M686.40 193.5 V608" stroke="#39414b" stroke-width="1" stroke-dasharray="9 3 3 3 3 3" stroke-dashoffset="7.5"/><path d="M722.50 193.5 V608" stroke="#39414b" stroke-width="1" stroke-dasharray="9 3 3 3 3 3" stroke-dashoffset="7.5"/><path d="M758.60 193.5 V608" stroke="#39414b" stroke-width="1" stroke-dasharray="9 3 3 3 3 3" stroke-dashoffset="7.5"/><path d="M794.70 193.5 V608" stroke="#39414b" stroke-width="1" stroke-dasharray="9 3 3 3 3 3" stroke-dashoffset="7.5"/><path d="M830.80 193.5 V608" stroke="#39414b" stroke-width="1" stroke-dasharray="9 3 3 3 3 3" stroke-dashoffset="7.5"/><path d="M866.90 193.5 V608" stroke="#39414b" stroke-width="1" stroke-dasharray="9 3 3 3 3 3" stroke-dashoffset="7.5"/><path d="M903.00 193.5 V608" stroke="#39414b" stroke-width="1" stroke-dasharray="9 3 3 3 3 3" stroke-dashoffset="7.5"/><path d="M939.10 193.5 V608" stroke="#39414b" stroke-width="1" stroke-dasharray="9 3 3 3 3 3" stroke-dashoffset="7.5"/><path d="M975.20 193.5 V608" stroke="#39414b" stroke-width="1" stroke-dasharray="9 3 3 3 3 3" stroke-dashoffset="7.5"/><path d="M1011.30 193.5 V608" stroke="#39414b" stroke-width="1" stroke-dasharray="9 3 3 3 3 3" stroke-dashoffset="7.5"/><path d="M604.5 199 V556" stroke="#39414b" stroke-width="1" stroke-dasharray="9 3 3 3 3 3"/><path d="M600.5 225.60 L607.5 232.60" stroke="#39414b" stroke-width="1"/><path d="M600.5 261.70 L607.5 268.70" stroke="#39414b" stroke-width="1"/><path d="M600.5 297.80 L607.5 304.80" stroke="#39414b" stroke-width="1"/><path d="M600.5 333.90 L607.5 340.90" stroke="#39414b" stroke-width="1"/><path d="M600.5 370.00 L607.5 377.00" stroke="#39414b" stroke-width="1"/><path d="M600.5 406.10 L607.5 413.10" stroke="#39414b" stroke-width="1"/><path d="M600.5 442.20 L607.5 449.20" stroke="#39414b" stroke-width="1"/><path d="M600.5 478.30 L607.5 485.30" stroke="#39414b" stroke-width="1"/><path d="M600.5 514.40 L607.5 521.40" stroke="#39414b" stroke-width="1"/><path d="M600.5 550.50 L607.5 557.50" stroke="#39414b" stroke-width="1"/><path transform="translate(605.70 207.20) scale(0.833 0.860)" d="M0.3 2 L2.8 0 V10 M0 10 H5.5" fill="none" stroke="#414955" stroke-width="1.000" vector-effect="non-scaling-stroke"/><path transform="translate(612.70 207.20) scale(0.833 0.860)" d="M2 0 H4 L6 2 V8 L4 10 H2 L0 8 V2 Z" fill="none" stroke="#414955" stroke-width="1.000" vector-effect="non-scaling-stroke"/><path transform="translate(619.70 207.20) scale(0.833 0.860)" d="M2 0 H4 L6 2 V8 L4 10 H2 L0 8 V2 Z" fill="none" stroke="#414955" stroke-width="1.000" vector-effect="non-scaling-stroke"/><path transform="translate(605.70 243.30) scale(0.833 0.860)" d="M0.3 2 L2.8 0 V10 M0 10 H5.5" fill="none" stroke="#414955" stroke-width="1.000" vector-effect="non-scaling-stroke"/><path transform="translate(612.70 243.30) scale(0.833 0.860)" d="M2 0 H4 L6 2 V8 L4 10 H2 L0 8 V2 Z" fill="none" stroke="#414955" stroke-width="1.000" vector-effect="non-scaling-stroke"/><path transform="translate(619.70 243.30) scale(0.833 0.860)" d="M2 0 H4 L6 2 V8 L4 10 H2 L0 8 V2 Z" fill="none" stroke="#414955" stroke-width="1.000" vector-effect="non-scaling-stroke"/><path transform="translate(605.70 279.40) scale(0.833 0.860)" d="M0.3 2 L2.8 0 V10 M0 10 H5.5" fill="none" stroke="#414955" stroke-width="1.000" vector-effect="non-scaling-stroke"/><path transform="translate(612.70 279.40) scale(0.833 0.860)" d="M2 0 H4 L6 2 V8 L4 10 H2 L0 8 V2 Z" fill="none" stroke="#414955" stroke-width="1.000" vector-effect="non-scaling-stroke"/><path transform="translate(619.70 279.40) scale(0.833 0.860)" d="M2 0 H4 L6 2 V8 L4 10 H2 L0 8 V2 Z" fill="none" stroke="#414955" stroke-width="1.000" vector-effect="non-scaling-stroke"/><path transform="translate(605.70 315.50) scale(0.833 0.860)" d="M0.3 2 L2.8 0 V10 M0 10 H5.5" fill="none" stroke="#414955" stroke-width="1.000" vector-effect="non-scaling-stroke"/><path transform="translate(612.70 315.50) scale(0.833 0.860)" d="M2 0 H4 L6 2 V8 L4 10 H2 L0 8 V2 Z" fill="none" stroke="#414955" stroke-width="1.000" vector-effect="non-scaling-stroke"/><path transform="translate(619.70 315.50) scale(0.833 0.860)" d="M2 0 H4 L6 2 V8 L4 10 H2 L0 8 V2 Z" fill="none" stroke="#414955" stroke-width="1.000" vector-effect="non-scaling-stroke"/><path transform="translate(605.70 351.60) scale(0.833 0.860)" d="M0.3 2 L2.8 0 V10 M0 10 H5.5" fill="none" stroke="#414955" stroke-width="1.000" vector-effect="non-scaling-stroke"/><path transform="translate(612.70 351.60) scale(0.833 0.860)" d="M2 0 H4 L6 2 V8 L4 10 H2 L0 8 V2 Z" fill="none" stroke="#414955" stroke-width="1.000" vector-effect="non-scaling-stroke"/><path transform="translate(619.70 351.60) scale(0.833 0.860)" d="M2 0 H4 L6 2 V8 L4 10 H2 L0 8 V2 Z" fill="none" stroke="#414955" stroke-width="1.000" vector-effect="non-scaling-stroke"/><path transform="translate(605.70 387.70) scale(0.833 0.860)" d="M0.3 2 L2.8 0 V10 M0 10 H5.5" fill="none" stroke="#414955" stroke-width="1.000" vector-effect="non-scaling-stroke"/><path transform="translate(612.70 387.70) scale(0.833 0.860)" d="M2 0 H4 L6 2 V8 L4 10 H2 L0 8 V2 Z" fill="none" stroke="#414955" stroke-width="1.000" vector-effect="non-scaling-stroke"/><path transform="translate(619.70 387.70) scale(0.833 0.860)" d="M2 0 H4 L6 2 V8 L4 10 H2 L0 8 V2 Z" fill="none" stroke="#414955" stroke-width="1.000" vector-effect="non-scaling-stroke"/><path transform="translate(605.70 423.80) scale(0.833 0.860)" d="M0.3 2 L2.8 0 V10 M0 10 H5.5" fill="none" stroke="#414955" stroke-width="1.000" vector-effect="non-scaling-stroke"/><path transform="translate(612.70 423.80) scale(0.833 0.860)" d="M2 0 H4 L6 2 V8 L4 10 H2 L0 8 V2 Z" fill="none" stroke="#414955" stroke-width="1.000" vector-effect="non-scaling-stroke"/><path transform="translate(619.70 423.80) scale(0.833 0.860)" d="M2 0 H4 L6 2 V8 L4 10 H2 L0 8 V2 Z" fill="none" stroke="#414955" stroke-width="1.000" vector-effect="non-scaling-stroke"/><path transform="translate(605.70 459.90) scale(0.833 0.860)" d="M0.3 2 L2.8 0 V10 M0 10 H5.5" fill="none" stroke="#414955" stroke-width="1.000" vector-effect="non-scaling-stroke"/><path transform="translate(612.70 459.90) scale(0.833 0.860)" d="M2 0 H4 L6 2 V8 L4 10 H2 L0 8 V2 Z" fill="none" stroke="#414955" stroke-width="1.000" vector-effect="non-scaling-stroke"/><path transform="translate(619.70 459.90) scale(0.833 0.860)" d="M2 0 H4 L6 2 V8 L4 10 H2 L0 8 V2 Z" fill="none" stroke="#414955" stroke-width="1.000" vector-effect="non-scaling-stroke"/><path transform="translate(605.70 496.00) scale(0.833 0.860)" d="M0.3 2 L2.8 0 V10 M0 10 H5.5" fill="none" stroke="#414955" stroke-width="1.000" vector-effect="non-scaling-stroke"/><path transform="translate(612.70 496.00) scale(0.833 0.860)" d="M2 0 H4 L6 2 V8 L4 10 H2 L0 8 V2 Z" fill="none" stroke="#414955" stroke-width="1.000" vector-effect="non-scaling-stroke"/><path transform="translate(619.70 496.00) scale(0.833 0.860)" d="M2 0 H4 L6 2 V8 L4 10 H2 L0 8 V2 Z" fill="none" stroke="#414955" stroke-width="1.000" vector-effect="non-scaling-stroke"/><path transform="translate(605.70 532.10) scale(0.833 0.860)" d="M0.3 2 L2.8 0 V10 M0 10 H5.5" fill="none" stroke="#414955" stroke-width="1.000" vector-effect="non-scaling-stroke"/><path transform="translate(612.70 532.10) scale(0.833 0.860)" d="M2 0 H4 L6 2 V8 L4 10 H2 L0 8 V2 Z" fill="none" stroke="#414955" stroke-width="1.000" vector-effect="non-scaling-stroke"/><path transform="translate(619.70 532.10) scale(0.833 0.860)" d="M2 0 H4 L6 2 V8 L4 10 H2 L0 8 V2 Z" fill="none" stroke="#414955" stroke-width="1.000" vector-effect="non-scaling-stroke"/><path d="M646 600.3 H1014" stroke="#39414b" stroke-width="1" stroke-dasharray="9 3 3 3 3 3"/><path d="M646.80 604 L653.80 597" stroke="#39414b" stroke-width="1"/><path d="M682.90 604 L689.90 597" stroke="#39414b" stroke-width="1"/><path d="M719.00 604 L726.00 597" stroke="#39414b" stroke-width="1"/><path d="M755.10 604 L762.10 597" stroke="#39414b" stroke-width="1"/><path d="M791.20 604 L798.20 597" stroke="#39414b" stroke-width="1"/><path d="M827.30 604 L834.30 597" stroke="#39414b" stroke-width="1"/><path d="M863.40 604 L870.40 597" stroke="#39414b" stroke-width="1"/><path d="M899.50 604 L906.50 597" stroke="#39414b" stroke-width="1"/><path d="M935.60 604 L942.60 597" stroke="#39414b" stroke-width="1"/><path d="M971.70 604 L978.70 597" stroke="#39414b" stroke-width="1"/><path d="M1007.80 604 L1014.80 597" stroke="#39414b" stroke-width="1"/><path transform="translate(659.00 581.20) scale(0.833 0.860)" d="M0.3 2 L2.8 0 V10 M0 10 H5.5" fill="none" stroke="#414955" stroke-width="1.000" vector-effect="non-scaling-stroke"/><path transform="translate(666.00 581.20) scale(0.833 0.860)" d="M2 0 H4 L6 2 V8 L4 10 H2 L0 8 V2 Z" fill="none" stroke="#414955" stroke-width="1.000" vector-effect="non-scaling-stroke"/><path transform="translate(673.00 581.20) scale(0.833 0.860)" d="M2 0 H4 L6 2 V8 L4 10 H2 L0 8 V2 Z" fill="none" stroke="#414955" stroke-width="1.000" vector-effect="non-scaling-stroke"/><path transform="translate(695.10 581.20) scale(0.833 0.860)" d="M0.3 2 L2.8 0 V10 M0 10 H5.5" fill="none" stroke="#414955" stroke-width="1.000" vector-effect="non-scaling-stroke"/><path transform="translate(702.10 581.20) scale(0.833 0.860)" d="M2 0 H4 L6 2 V8 L4 10 H2 L0 8 V2 Z" fill="none" stroke="#414955" stroke-width="1.000" vector-effect="non-scaling-stroke"/><path transform="translate(709.10 581.20) scale(0.833 0.860)" d="M2 0 H4 L6 2 V8 L4 10 H2 L0 8 V2 Z" fill="none" stroke="#414955" stroke-width="1.000" vector-effect="non-scaling-stroke"/><path transform="translate(731.20 581.20) scale(0.833 0.860)" d="M0.3 2 L2.8 0 V10 M0 10 H5.5" fill="none" stroke="#414955" stroke-width="1.000" vector-effect="non-scaling-stroke"/><path transform="translate(738.20 581.20) scale(0.833 0.860)" d="M2 0 H4 L6 2 V8 L4 10 H2 L0 8 V2 Z" fill="none" stroke="#414955" stroke-width="1.000" vector-effect="non-scaling-stroke"/><path transform="translate(745.20 581.20) scale(0.833 0.860)" d="M2 0 H4 L6 2 V8 L4 10 H2 L0 8 V2 Z" fill="none" stroke="#414955" stroke-width="1.000" vector-effect="non-scaling-stroke"/><path transform="translate(767.30 581.20) scale(0.833 0.860)" d="M0.3 2 L2.8 0 V10 M0 10 H5.5" fill="none" stroke="#414955" stroke-width="1.000" vector-effect="non-scaling-stroke"/><path transform="translate(774.30 581.20) scale(0.833 0.860)" d="M2 0 H4 L6 2 V8 L4 10 H2 L0 8 V2 Z" fill="none" stroke="#414955" stroke-width="1.000" vector-effect="non-scaling-stroke"/><path transform="translate(781.30 581.20) scale(0.833 0.860)" d="M2 0 H4 L6 2 V8 L4 10 H2 L0 8 V2 Z" fill="none" stroke="#414955" stroke-width="1.000" vector-effect="non-scaling-stroke"/><path transform="translate(803.40 581.20) scale(0.833 0.860)" d="M0.3 2 L2.8 0 V10 M0 10 H5.5" fill="none" stroke="#414955" stroke-width="1.000" vector-effect="non-scaling-stroke"/><path transform="translate(810.40 581.20) scale(0.833 0.860)" d="M2 0 H4 L6 2 V8 L4 10 H2 L0 8 V2 Z" fill="none" stroke="#414955" stroke-width="1.000" vector-effect="non-scaling-stroke"/><path transform="translate(817.40 581.20) scale(0.833 0.860)" d="M2 0 H4 L6 2 V8 L4 10 H2 L0 8 V2 Z" fill="none" stroke="#414955" stroke-width="1.000" vector-effect="non-scaling-stroke"/><path transform="translate(839.50 581.20) scale(0.833 0.860)" d="M0.3 2 L2.8 0 V10 M0 10 H5.5" fill="none" stroke="#414955" stroke-width="1.000" vector-effect="non-scaling-stroke"/><path transform="translate(846.50 581.20) scale(0.833 0.860)" d="M2 0 H4 L6 2 V8 L4 10 H2 L0 8 V2 Z" fill="none" stroke="#414955" stroke-width="1.000" vector-effect="non-scaling-stroke"/><path transform="translate(853.50 581.20) scale(0.833 0.860)" d="M2 0 H4 L6 2 V8 L4 10 H2 L0 8 V2 Z" fill="none" stroke="#414955" stroke-width="1.000" vector-effect="non-scaling-stroke"/><path transform="translate(875.60 581.20) scale(0.833 0.860)" d="M0.3 2 L2.8 0 V10 M0 10 H5.5" fill="none" stroke="#414955" stroke-width="1.000" vector-effect="non-scaling-stroke"/><path transform="translate(882.60 581.20) scale(0.833 0.860)" d="M2 0 H4 L6 2 V8 L4 10 H2 L0 8 V2 Z" fill="none" stroke="#414955" stroke-width="1.000" vector-effect="non-scaling-stroke"/><path transform="translate(889.60 581.20) scale(0.833 0.860)" d="M2 0 H4 L6 2 V8 L4 10 H2 L0 8 V2 Z" fill="none" stroke="#414955" stroke-width="1.000" vector-effect="non-scaling-stroke"/><path transform="translate(911.70 581.20) scale(0.833 0.860)" d="M0.3 2 L2.8 0 V10 M0 10 H5.5" fill="none" stroke="#414955" stroke-width="1.000" vector-effect="non-scaling-stroke"/><path transform="translate(918.70 581.20) scale(0.833 0.860)" d="M2 0 H4 L6 2 V8 L4 10 H2 L0 8 V2 Z" fill="none" stroke="#414955" stroke-width="1.000" vector-effect="non-scaling-stroke"/><path transform="translate(925.70 581.20) scale(0.833 0.860)" d="M2 0 H4 L6 2 V8 L4 10 H2 L0 8 V2 Z" fill="none" stroke="#414955" stroke-width="1.000" vector-effect="non-scaling-stroke"/><path transform="translate(947.80 581.20) scale(0.833 0.860)" d="M0.3 2 L2.8 0 V10 M0 10 H5.5" fill="none" stroke="#414955" stroke-width="1.000" vector-effect="non-scaling-stroke"/><path transform="translate(954.80 581.20) scale(0.833 0.860)" d="M2 0 H4 L6 2 V8 L4 10 H2 L0 8 V2 Z" fill="none" stroke="#414955" stroke-width="1.000" vector-effect="non-scaling-stroke"/><path transform="translate(961.80 581.20) scale(0.833 0.860)" d="M2 0 H4 L6 2 V8 L4 10 H2 L0 8 V2 Z" fill="none" stroke="#414955" stroke-width="1.000" vector-effect="non-scaling-stroke"/><path transform="translate(983.90 581.20) scale(0.833 0.860)" d="M0.3 2 L2.8 0 V10 M0 10 H5.5" fill="none" stroke="#414955" stroke-width="1.000" vector-effect="non-scaling-stroke"/><path transform="translate(990.90 581.20) scale(0.833 0.860)" d="M2 0 H4 L6 2 V8 L4 10 H2 L0 8 V2 Z" fill="none" stroke="#414955" stroke-width="1.000" vector-effect="non-scaling-stroke"/><path transform="translate(997.90 581.20) scale(0.833 0.860)" d="M2 0 H4 L6 2 V8 L4 10 H2 L0 8 V2 Z" fill="none" stroke="#414955" stroke-width="1.000" vector-effect="non-scaling-stroke"/><path d="M686.40 313 V335.90 M903.00 313 V335.90 M686.40 323.1 H903.00 M678.98 330.52 L693.82 315.68 M895.58 330.52 L910.42 315.68 M662 337.90 H684.40 M662 446.20 H684.40 M672.6 337.90 V446.20 M665.18 330.48 L680.02 345.32 M665.18 438.78 L680.02 453.62 M686.40 448.20 V470.8 M866.90 448.20 V470.8 M686.40 460.2 H866.90 M678.98 467.62 L693.82 452.78 M859.48 467.62 L874.32 452.78 M904.90 338.53 L925.77 345.49 M868.80 446.83 L889.67 453.79 M917.23 342.64 L881.13 450.94 M912.53 333.25 L921.93 352.03 M876.43 441.55 L885.83 460.33" stroke="#00ff00" stroke-width="1" fill="none"/><path transform="translate(783.30 305.20) scale(1.000 1.000)" d="M5.7 1.6 L4.3 0 H2 L0 2 V8 L2 10 H4 L6 8 V5.6 L4.3 3.9 H1.8 L0 5.6" fill="none" stroke="#f4f4f4" stroke-width="1.050" vector-effect="non-scaling-stroke"/><path transform="translate(791.30 305.20) scale(1.000 1.000)" d="M2 0 H4 L6 2 V8 L4 10 H2 L0 8 V2 Z" fill="none" stroke="#f4f4f4" stroke-width="1.050" vector-effect="non-scaling-stroke"/><path transform="translate(799.30 305.20) scale(1.000 1.000)" d="M2 0 H4 L6 2 V8 L4 10 H2 L0 8 V2 Z" fill="none" stroke="#f4f4f4" stroke-width="1.050" vector-effect="non-scaling-stroke"/><path transform="translate(647.30 387.20) scale(1.000 1.000)" d="M0 1.5 L1.5 0 H4.5 L6 1.5 V3.3 L4.5 4.8 H2 M4.5 4.8 L6 6.3 V8.5 L4.5 10 H1.5 L0 8.5" fill="none" stroke="#f4f4f4" stroke-width="1.050" vector-effect="non-scaling-stroke"/><path transform="translate(655.30 387.20) scale(1.000 1.000)" d="M2 0 H4 L6 2 V8 L4 10 H2 L0 8 V2 Z" fill="none" stroke="#f4f4f4" stroke-width="1.050" vector-effect="non-scaling-stroke"/><path transform="translate(663.30 387.20) scale(1.000 1.000)" d="M2 0 H4 L6 2 V8 L4 10 H2 L0 8 V2 Z" fill="none" stroke="#f4f4f4" stroke-width="1.050" vector-effect="non-scaling-stroke"/><path transform="translate(765.30 469.80) scale(1.000 1.000)" d="M6 0 H0.6 V4.3 H4 L6 6.3 V8.2 L4.2 10 H1.6 L0 8.6" fill="none" stroke="#f4f4f4" stroke-width="1.050" vector-effect="non-scaling-stroke"/><path transform="translate(773.30 469.80) scale(1.000 1.000)" d="M2 0 H4 L6 2 V8 L4 10 H2 L0 8 V2 Z" fill="none" stroke="#f4f4f4" stroke-width="1.050" vector-effect="non-scaling-stroke"/><path transform="translate(781.30 469.80) scale(1.000 1.000)" d="M2 0 H4 L6 2 V8 L4 10 H2 L0 8 V2 Z" fill="none" stroke="#f4f4f4" stroke-width="1.050" vector-effect="non-scaling-stroke"/><path transform="translate(901.20 397.20) scale(1.000 1.000)" d="M0 1.5 L1.5 0 H4.5 L6 1.5 V3.3 L4.5 4.8 H2 M4.5 4.8 L6 6.3 V8.5 L4.5 10 H1.5 L0 8.5" fill="none" stroke="#f4f4f4" stroke-width="1.050" vector-effect="non-scaling-stroke"/><path transform="translate(909.20 397.20) scale(1.000 1.000)" d="M0.3 2 L2.8 0 V10 M0 10 H5.5" fill="none" stroke="#f4f4f4" stroke-width="1.050" vector-effect="non-scaling-stroke"/><path transform="translate(917.20 397.20) scale(1.000 1.000)" d="M5.7 1.6 L4.3 0 H2 L0 2 V8 L2 10 H4 L6 8 V5.6 L4.3 3.9 H1.8 L0 5.6" fill="none" stroke="#f4f4f4" stroke-width="1.050" vector-effect="non-scaling-stroke"/><path d="M904.00 336.90 L938.4 268" stroke="#9a9a9a" stroke-width="1" stroke-dasharray="3 3"/><path d="M686.40 337.90 H903.00 L866.90 446.20 H686.40Z" fill="none" stroke="#f4f4f4" stroke-width="3.2" stroke-linejoin="miter"/><path d="M697.7 348.9 H886.9 L857.8 433.8 H697.7Z" fill="none" stroke="#b8dcff" stroke-width="1" stroke-dasharray="3 3"/><circle cx="697.7" cy="348.9" r="3.3" fill="none" stroke="#e8c848" stroke-width="1.1"/><circle cx="734.8" cy="348.9" r="3.3" fill="none" stroke="#ee22ee" stroke-width="1.1"/><circle cx="772.7" cy="348.9" r="3.3" fill="none" stroke="#ee22ee" stroke-width="1.1"/><circle cx="810.8" cy="348.9" r="3.3" fill="none" stroke="#ee22ee" stroke-width="1.1"/><circle cx="849" cy="348.9" r="3.3" fill="none" stroke="#ee22ee" stroke-width="1.1"/><circle cx="886.9" cy="348.9" r="3.3" fill="none" stroke="#e8c848" stroke-width="1.1"/><circle cx="697.7" cy="433.8" r="3.3" fill="none" stroke="#e8c848" stroke-width="1.1"/><circle cx="729.7" cy="433.8" r="3.3" fill="none" stroke="#ee22ee" stroke-width="1.1"/><circle cx="761.9" cy="433.8" r="3.3" fill="none" stroke="#ee22ee" stroke-width="1.1"/><circle cx="793.8" cy="433.8" r="3.3" fill="none" stroke="#ee22ee" stroke-width="1.1"/><circle cx="825.8" cy="433.8" r="3.3" fill="none" stroke="#ee22ee" stroke-width="1.1"/><circle cx="857.8" cy="433.8" r="3.3" fill="none" stroke="#e8c848" stroke-width="1.1"/><circle cx="697.7" cy="377.1" r="3.3" fill="none" stroke="#ee22ee" stroke-width="1.1"/><circle cx="697.7" cy="405.8" r="3.3" fill="none" stroke="#ee22ee" stroke-width="1.1"/><circle cx="876.9" cy="377.1" r="3.3" fill="none" stroke="#ee22ee" stroke-width="1.1"/><circle cx="868.1" cy="405.8" r="3.3" fill="none" stroke="#ee22ee" stroke-width="1.1"/><text x="942" y="267" font-size="14.5" fill="#f4f4f4" font-weight="300" font-family="Liberation Sans">全部纵筋</text><text x="942" y="285.5" font-size="14.5" fill="#f4f4f4" font-weight="300" font-family="Liberation Sans">箍筋</text><text x="942" y="302.5" font-size="14.5" fill="#f4f4f4" font-weight="300" font-family="Liberation Sans">连接植筋</text><text x="1013.5" y="267" font-size="13.5" fill="#00f000" font-family="Liberation Mono" textLength="38.5" lengthAdjust="spacingAndGlyphs">16C22</text><text x="1013" y="285.3" font-size="13.5" fill="#00f000" font-family="Liberation Mono" textLength="15" lengthAdjust="spacingAndGlyphs">GJ</text><text x="1013" y="303" font-size="13.5" fill="#00f000" font-family="Liberation Mono" textLength="31" lengthAdjust="spacingAndGlyphs">LJZJ</text></g></svg>
<div class="ab" style="left:540px;top:159px;width:208px;height:37px;background:#000"></div>
<div class="t" style="left:552px;top:175px;color:#e6e6e6">钢筋信息:</div>
<div class="ab" style="left:609px;top:168px;width:135px;height:25.5px;background:#fff;border-radius:3px"></div>
<div class="t" style="left:616px;top:175px;color:#333">3C20</div>
<svg style="left:732px;top:180px" width="7" height="4"><path d="M0 0 H7 L3.5 3.5Z" fill="#666"/></svg>
</body></html>
